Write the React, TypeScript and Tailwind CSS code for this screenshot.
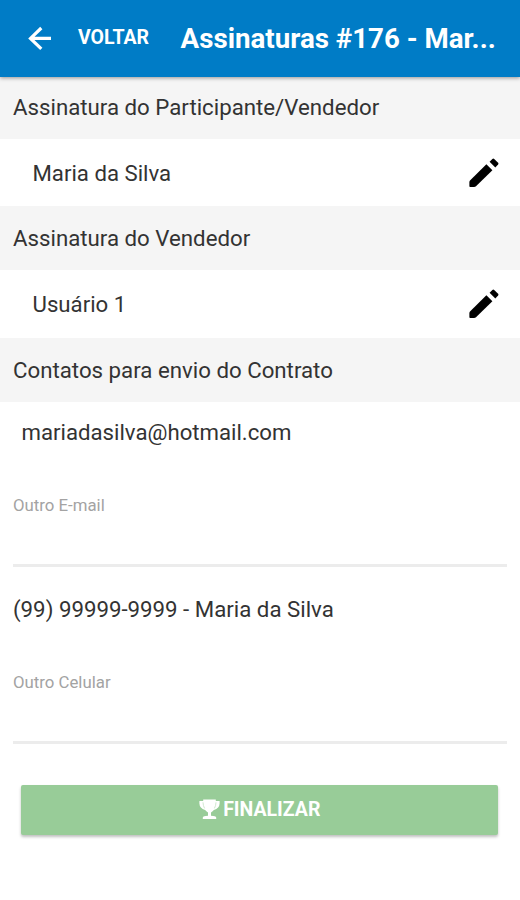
const ArrowIcon = (): JSX.Element => {
  return (
    <svg
      viewBox="0 0 32 32"
      className="size-8"
      fill="none"
      stroke="#fff"
      strokeWidth="3.2"
    >
      <path d="M28 16.4 H7.5 M18.3 6 L7.5 16.4 L18.3 26.8" />
    </svg>
  );
};

const PencilIcon = (): JSX.Element => {
  return (
    <svg viewBox="0 0 30 30" className="size-[30px]" fill="#000">
      <path d="M1 22.4 L17.4 6.2 L23.4 12.2 L7 28.3 Q6.2 29 5 29 H1.2 Q0.4 29 0.4 28.2 V24 Q0.4 23 1 22.4 Z" />
      <path d="M20.6 3.7 L23.4 0.9 Q24.3 0.1 25.2 0.9 L29.1 4.8 Q29.9 5.7 29.1 6.6 L26.3 9.4 Z" />
    </svg>
  );
};

const TrophyIcon = (): JSX.Element => {
  return (
    <svg viewBox="0 0 21 21" className="h-[21px] w-[21px]" fill="#fff">
      <path d="M4.2 0.6 H16.8 V1.9 H20.6 V4.5 Q20.4 9.4 14.9 11 Q13.2 12.9 12 13.5 V16.8 Q17 17 17.2 18.4 V20 H3.8 V18.4 Q4 17 9 16.8 V13.5 Q7.8 12.9 6.1 11 Q0.6 9.4 0.4 4.5 V1.9 H4.2 Z" />
      <path
        d="M4 3.3 Q4.1 6.8 5.6 9.4 M17 3.3 Q16.9 6.8 15.4 9.4"
        fill="none"
        stroke="#c4e2c4"
        strokeWidth="0.8"
      />
    </svg>
  );
};

const SectionHeader = ({ title }: { title: string }): JSX.Element => {
  return (
    <h2 className="flex h-16 items-center bg-[#f5f5f5] px-[13px] pt-0.5 text-[22.25px] text-[#333]">
      {title}
    </h2>
  );
};

const SignatureRow = ({ name }: { name: string }): JSX.Element => {
  return (
    <div className="flex h-[67.5px] items-center justify-between pt-px pr-[21px] pl-[32.5px]">
      <span className="pt-px text-[22.2px] text-[#333]">{name}</span>
      <button type="button" aria-label={name}>
        <PencilIcon />
      </button>
    </div>
  );
};

const Field = ({ id, label }: { id: string; label: string }): JSX.Element => {
  return (
    <div className="mx-[13px] h-[73px] border-b-3 border-[#ececec]">
      <label
        htmlFor={id}
        className="block text-[16.8px] leading-[22px] text-[#a3a3a3]"
      >
        {label}
      </label>
      <input id={id} className="block h-10 w-full outline-none" />
    </div>
  );
};

const App = (): JSX.Element => {
  return (
    <div className="h-[900px] w-full overflow-hidden bg-white font-['Roboto',sans-serif]">
      <header className="relative flex h-[77px] items-center bg-[#007cc6] pb-0.5 text-white shadow-[0_1px_4px_rgba(0,0,0,0.4)]">
        <button type="button" className="ml-[23px] flex items-center">
          <ArrowIcon />
          <span className="ml-[23px] pt-px text-[19.5px] font-bold">VOLTAR</span>
        </button>
        <h1 className="ml-[31.5px] pt-0.5 text-[27.7px] font-bold whitespace-nowrap">
          Assinaturas #176 - Mar...
        </h1>
      </header>
      {/* the first header starts just under the toolbar */}
      <div className="-mt-[2.5px]">
        <SectionHeader title="Assinatura do Participante/Vendedor" />
      </div>
      <SignatureRow name="Maria da Silva" />
      <SectionHeader title="Assinatura do Vendedor" />
      <SignatureRow name="Usuário 1" />
      <SectionHeader title="Contatos para envio do Contrato" />
      <p className="flex h-[62px] items-center pt-px pl-[21.5px] text-[22.2px] text-[#333]">
        mariadasilva@hotmail.com
      </p>
      <div className="mt-[30px]">
        <Field id="email" label="Outro E-mail" />
      </div>
      <p className="mt-[26px] pl-[13px] text-[22.25px] leading-[33px] text-[#333]">
        (99) 99999-9999 - Maria da Silva
      </p>
      <div className="mt-[45px]">
        <Field id="celular" label="Outro Celular" />
      </div>
      <button
        type="button"
        className="mt-[41px] ml-[21px] flex h-[50px] w-[477px] items-center justify-center rounded-xs bg-[#98cc98] text-[19.5px] font-bold text-white shadow-[0_2px_3px_rgba(0,0,0,0.25)]"
      >
        <span className="mr-[3.5px]">
          <TrophyIcon />
        </span>
        <span>FINALIZAR</span>
      </button>
    </div>
  );
};
export default App;
